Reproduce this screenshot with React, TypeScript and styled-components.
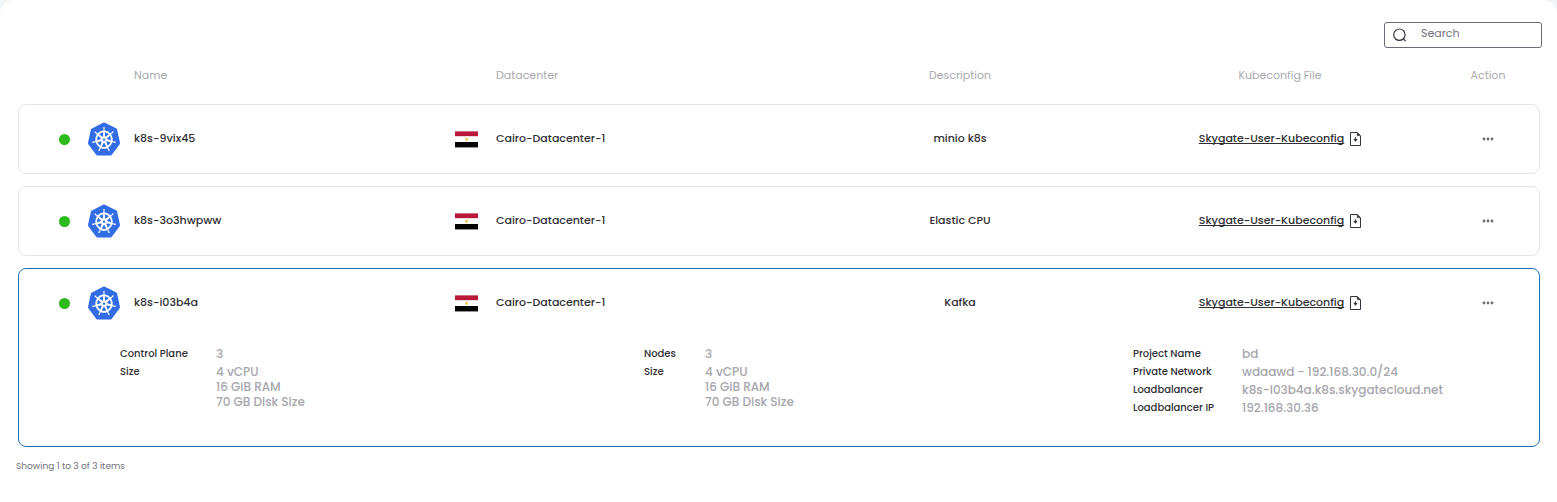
import React from "react";
import styled, { createGlobalStyle } from "styled-components";
import { SiKubernetes } from "react-icons/si";

const GlobalStyle = createGlobalStyle`
  * { box-sizing: border-box; }
  body {
    margin: 0;
    background: #f1f5f7;
    font-family: Poppins, Inter, "Liberation Sans", sans-serif;
    color: #2f2f33;
  }
`;

const Panel = styled.main`
  min-height: 100vh;
  padding: 22px 15px 24px;
  background: #ffffff;
  border-radius: 14px 14px 0 0;
`;

const Toolbar = styled.div`
  display: flex;
  justify-content: flex-end;
`;

const SearchBox = styled.label`
  display: flex;
  align-items: center;
  gap: 14px;
  width: 158px;
  height: 26px;
  padding: 0 8px;
  border: 1px solid #6b6a78;
  border-radius: 3px;
`;

const SearchInput = styled.input`
  flex: 1;
  min-width: 0;
  padding: 0 0 4px;
  border: 0;
  outline: 0;
  background: transparent;
  font: 400 11px/16px Poppins, Inter, sans-serif;
  color: #2f2f33;
  &::placeholder { color: #72727c; opacity: 1; }
`;

const ClusterTable = styled.table`
  display: flex;
  flex-direction: column;
  gap: 12px;
  margin: 0 2px 0 3px;
`;

const HeadGroup = styled.thead`
  display: block;
  padding: 0 1px;
`;

const Card = styled.tbody<{ $active?: boolean }>`
  display: block;
  border: 1px solid ${(p) => (p.$active ? "#1f6fb2" : "#e6e6e8")};
  border-radius: 8px;
`;

const Row = styled.tr<{ $head?: boolean }>`
  display: grid;
  grid-template-columns: 115px 321fr 342fr 326fr 314fr 102fr;
  align-items: center;
  height: ${(p) => (p.$head ? "44px" : "68px")};
  padding-top: ${(p) => (p.$head ? "10px" : "0")};
`;

const HeadCell = styled.th<{ $center?: boolean }>`
  padding: 0;
  font-size: 11px;
  line-height: 16px;
  font-weight: 400;
  color: #a9a9b0;
  text-align: ${(p) => (p.$center ? "center" : "left")};
`;

const DatacenterHead = styled(HeadCell)`
  padding-left: 41px;
`;

const Cell = styled.td<{ $center?: boolean }>`
  display: flex;
  align-items: center;
  justify-content: ${(p) => (p.$center ? "center" : "flex-start")};
  padding: 0;
  font-size: 11px;
  line-height: 16px;
  font-weight: 500;
`;

const StatusCell = styled(Cell)`
  gap: 18px;
  padding-left: 40px;
`;

const Label = styled.span`
  padding-bottom: 3px;
`;

const StatusDot = styled.span`
  width: 11px;
  height: 11px;
  border-radius: 50%;
  background: #2cba1c;
`;

const ClusterLogo = styled(SiKubernetes)`
  width: 32px;
  height: 34px;
  color: #326de6;
`;

const DatacenterCell = styled(Cell)`
  gap: 18px;
`;

const FileLink = styled.a`
  display: flex;
  align-items: center;
  gap: 6px;
  color: inherit;
  text-decoration: none;
`;

const FileName = styled(Label)`
  text-decoration: underline;
  text-decoration-skip-ink: none;
  text-underline-offset: 1px;
`;

const MoreButton = styled.button`
  display: flex;
  padding: 6px;
  border: 0;
  background: transparent;
  cursor: pointer;
`;

const DetailRow = styled.tr`
  display: block;
`;

const DetailCell = styled.td`
  display: flex;
  justify-content: space-between;
  padding: 9px 101px 30px;
`;

const DetailList = styled.dl<{ $label: number; $value: number }>`
  display: grid;
  grid-template-columns: ${(p) => p.$label}px ${(p) => p.$value}px;
  grid-auto-rows: min-content;
  row-gap: 3px;
  min-height: 70px;
  margin: 0;
  line-height: 15px;
`;

const Term = styled.dt`
  font-size: 10px;
  font-weight: 500;
  white-space: nowrap;
`;

const Value = styled.dd`
  margin: 0;
  font-size: 12px;
  font-weight: 500;
  color: #a6a6ad;
  white-space: pre;
`;

const Footer = styled.p`
  margin: 12px 0 0 1px;
  font-size: 9px;
  line-height: 14px;
  color: #6f6f79;
`;

const SearchIcon = () => (
  <svg width="14" height="14" viewBox="0 0 14 14" fill="none" stroke="#33333d" strokeWidth="1.2" strokeLinecap="round" aria-hidden="true">
    <circle cx="6.4" cy="6.7" r="5.7" />
    <path d="M10.6 10.8 12.4 12.9" />
  </svg>
);

const EgyptFlag = () => (
  <svg width="23" height="17" viewBox="0 0 23 17" role="img" aria-label="Egypt">
    <rect width="23" height="17" fill="#f3f3f3" />
    <rect y="0.4" width="23" height="5" fill="#b9183a" />
    <rect y="5.4" width="23" height="5.6" fill="#ffffff" />
    <rect y="11" width="23" height="5.4" fill="#050505" />
    <path d="M9.9 6.6 11.5 7.2 13.1 6.6 12.8 9.8H10.2Z" fill="#f2d06a" />
  </svg>
);

const FileIcon = () => (
  <svg width="11" height="14" viewBox="0 0 11 14" fill="none" stroke="#33333d" aria-hidden="true">
    <path d="M.5.5H7.2L10.5 3.8V13.5H.5Z" strokeWidth="1" />
    <path d="M7.2.6V3.8H10.4Z" fill="#33333d" strokeWidth=".4" />
    <path d="M5.5 5.3V7.5" strokeWidth="1.3" />
    <path d="M3.3 7H7.7L5.5 9.8Z" fill="#33333d" stroke="none" />
  </svg>
);

const MoreIcon = () => (
  <svg width="12" height="4" viewBox="0 0 12 4" fill="#6c6c72" aria-hidden="true">
    <circle cx="2" cy="2" r="1.4" />
    <circle cx="6" cy="2" r="1.4" />
    <circle cx="10" cy="2" r="1.4" />
  </svg>
);

const nodeSize = "4 vCPU\n16 GiB RAM\n70 GB Disk Size";

type DetailGroup = { label: number; value: number; items: [string, string][] };
type Cluster = { name: string; description: string; details?: DetailGroup[] };

const clusters: Cluster[] = [
  { name: "k8s-9vix45", description: "minio k8s" },
  { name: "k8s-3o3hwpww", description: "Elastic CPU" },
  {
    name: "k8s-i03b4a",
    description: "Kafka",
    details: [
      { label: 96, value: 87, items: [["Control Plane", "3"], ["Size", nodeSize]] },
      { label: 61, value: 87, items: [["Nodes", "3"], ["Size", nodeSize]] },
      {
        label: 109,
        value: 196,
        items: [
          ["Project Name", "bd"],
          ["Private Network", "wdaawd - 192.168.30.0/24"],
          ["Loadbalancer", "k8s-i03b4a.k8s.skygatecloud.net"],
          ["Loadbalancer IP", "192.168.30.36"],
        ],
      },
    ],
  },
];

const ClusterCard = ({ name, description, details }: Cluster) => (
  <Card $active={Boolean(details)}>
    <Row>
      <StatusCell>
        <StatusDot />
        <ClusterLogo preserveAspectRatio="none" />
      </StatusCell>
      <Cell><Label>{name}</Label></Cell>
      <DatacenterCell>
        <EgyptFlag />
        <Label>Cairo-Datacenter-1</Label>
      </DatacenterCell>
      <Cell $center><Label>{description}</Label></Cell>
      <Cell $center>
        <FileLink href="#kubeconfig">
          <FileName>Skygate-User-Kubeconfig</FileName>
          <FileIcon />
        </FileLink>
      </Cell>
      <Cell $center>
        <MoreButton type="button" aria-label={`Actions for ${name}`}><MoreIcon /></MoreButton>
      </Cell>
    </Row>
    {details && (
      <DetailRow>
        <DetailCell colSpan={6}>
          {details.map((group) => (
            <DetailList key={group.items[0][0]} $label={group.label} $value={group.value}>
              {group.items.map(([term, value]) => (
                <React.Fragment key={term}>
                  <Term>{term}</Term>
                  <Value>{value}</Value>
                </React.Fragment>
              ))}
            </DetailList>
          ))}
        </DetailCell>
      </DetailRow>
    )}
  </Card>
);

export default function App() {
  return (
    <>
      <GlobalStyle />
      <Panel>
        <Toolbar>
          <SearchBox>
            <SearchIcon />
            <SearchInput type="text" placeholder="Search" aria-label="Search" />
          </SearchBox>
        </Toolbar>
        <ClusterTable>
          <HeadGroup>
            <Row $head>
              <HeadCell />
              <HeadCell>Name</HeadCell>
              <DatacenterHead>Datacenter</DatacenterHead>
              <HeadCell $center>Description</HeadCell>
              <HeadCell $center>Kubeconfig File</HeadCell>
              <HeadCell $center>Action</HeadCell>
            </Row>
          </HeadGroup>
          {clusters.map((cluster) => (
            <ClusterCard key={cluster.name} {...cluster} />
          ))}
        </ClusterTable>
        <Footer>Showing 1 to 3 of 3 items</Footer>
      </Panel>
    </>
  );
}
